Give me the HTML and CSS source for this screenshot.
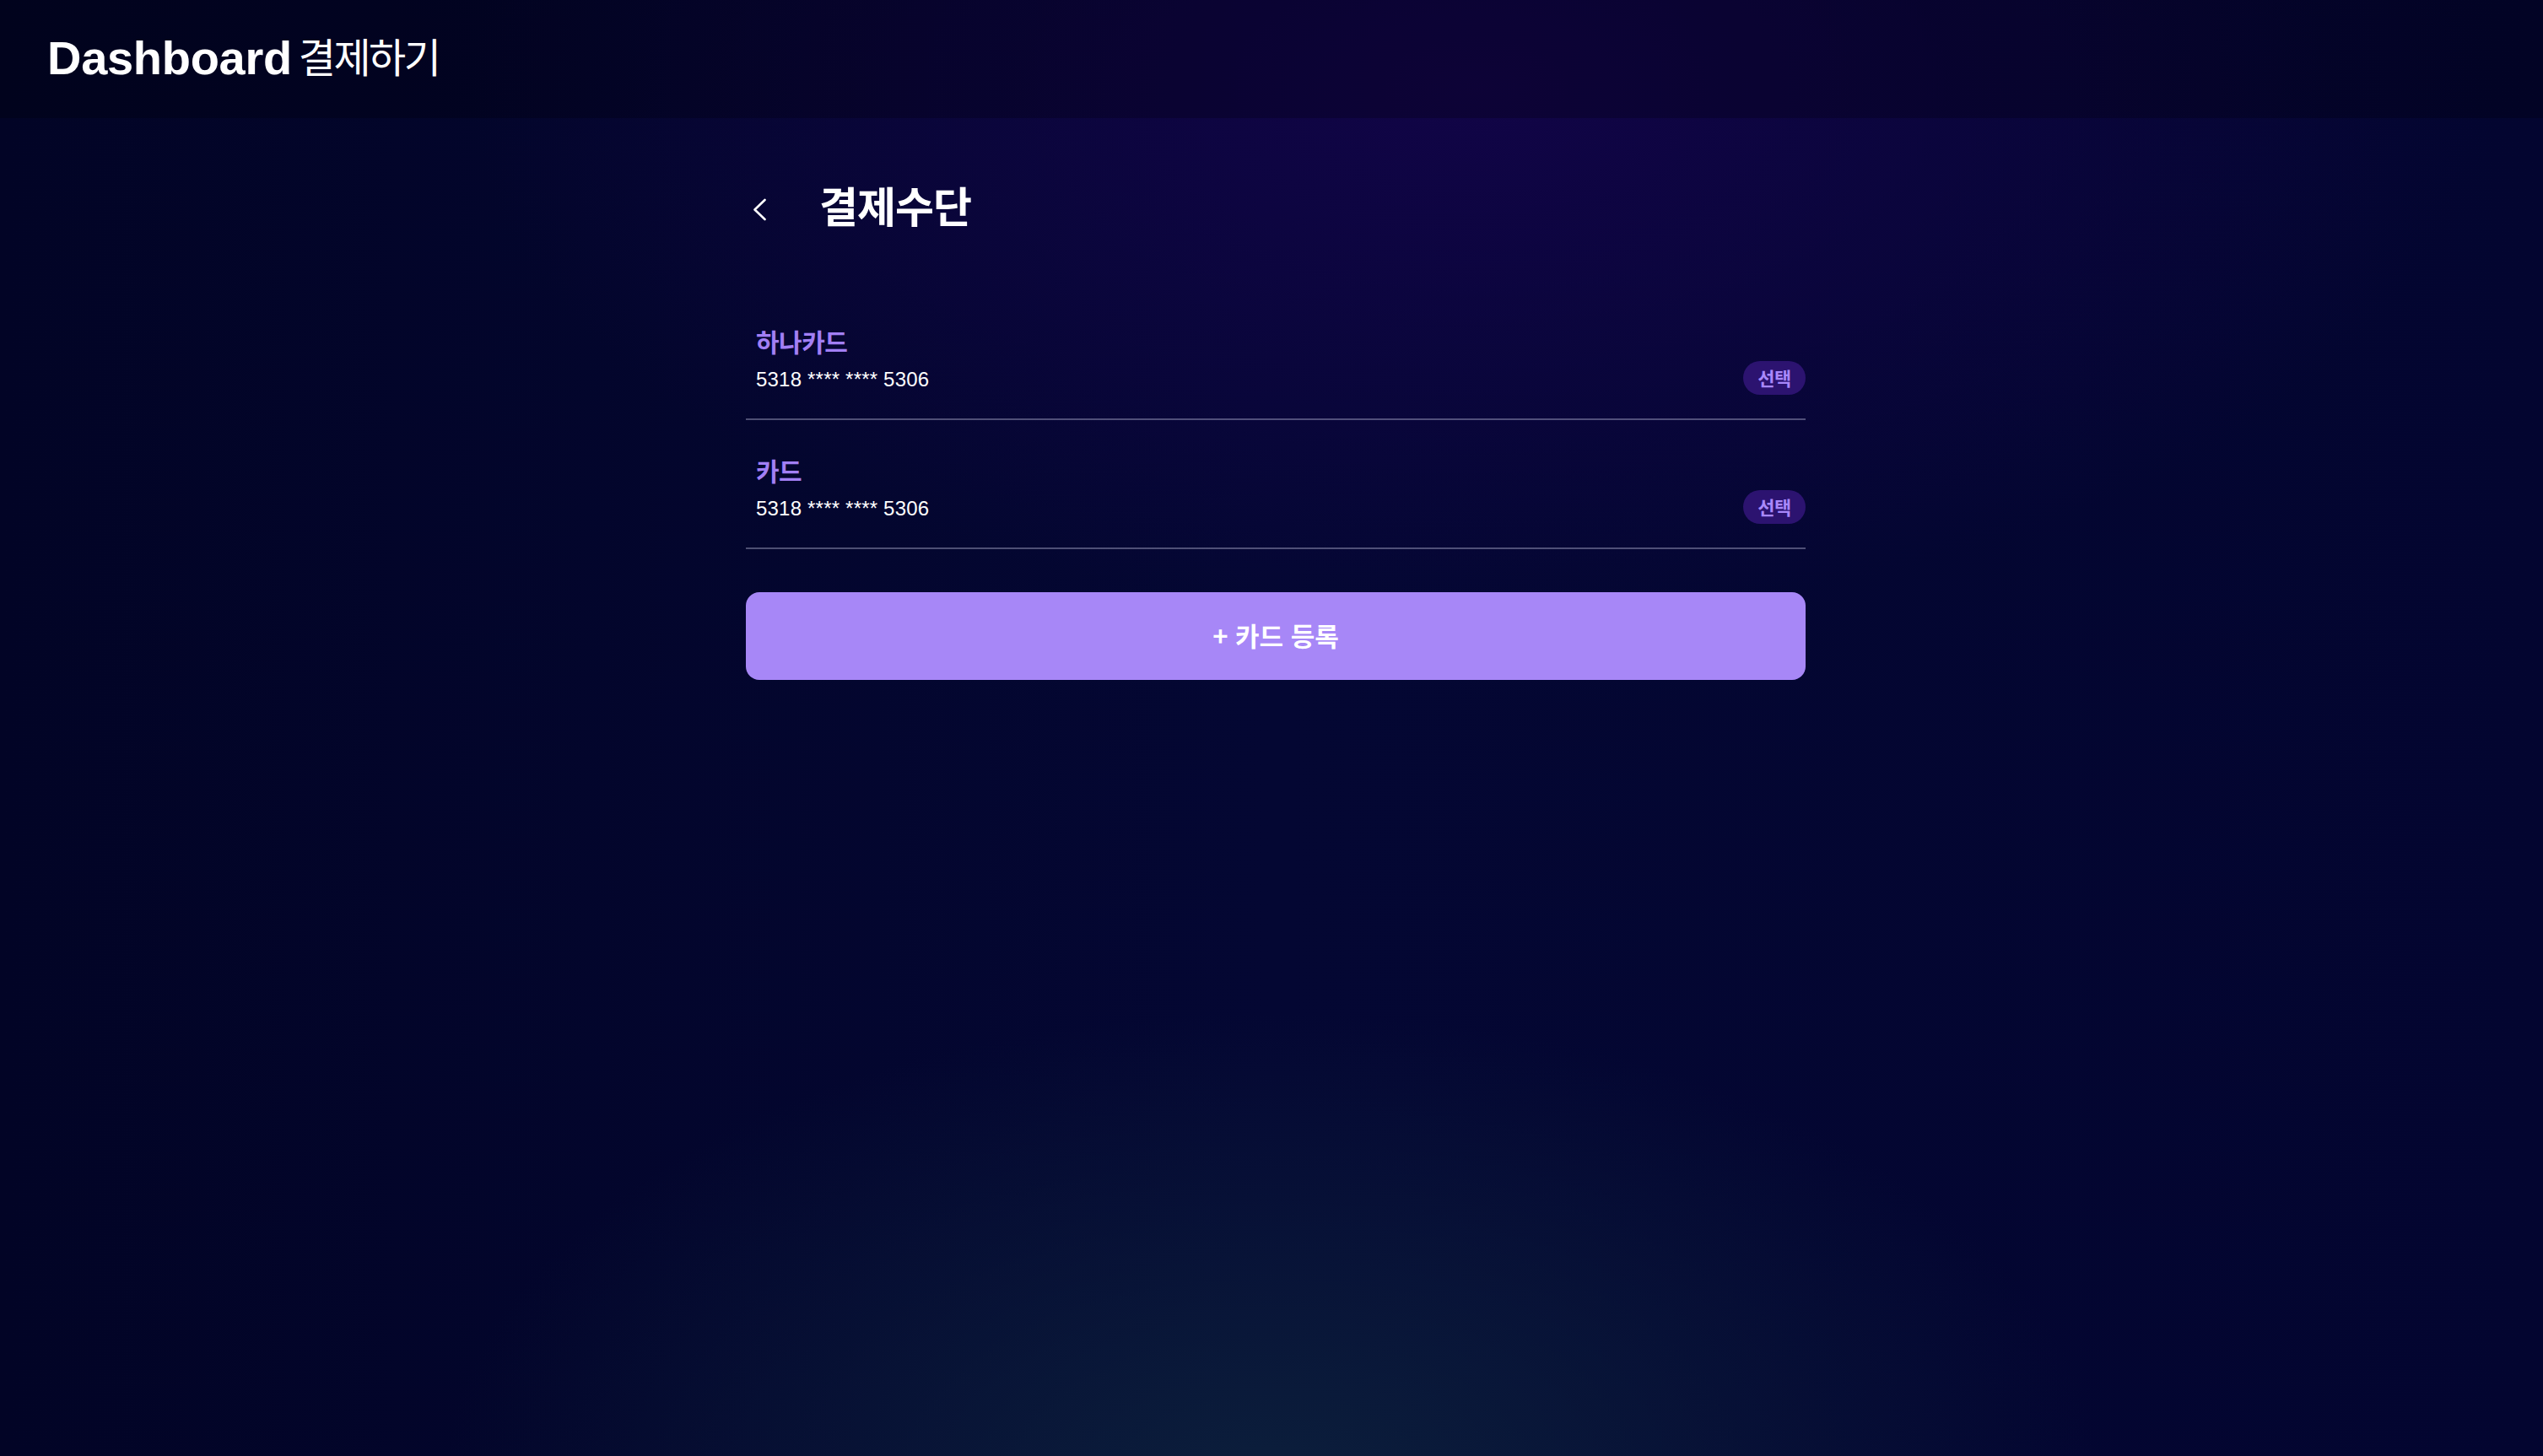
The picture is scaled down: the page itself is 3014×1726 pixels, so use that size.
FILE: index.html
```html
<!DOCTYPE html>
<html lang="ko">
<head>
<meta charset="utf-8">
<title>Dashboard 결제하기</title>
<link rel="stylesheet" href="styles.css">
</head>
<body>
<div class="page">
  <header class="topbar">
    <span class="brand">Dashboard</span><span class="brand-sub">결제하기</span>
  </header>
  <main class="main">
    <div class="wrap">
      <div class="title-row">
        <button class="back" aria-label="뒤로">
          <svg width="34" height="60" viewBox="0 0 34 60"><path d="M22.5 25 L10.5 36.5 L22.5 48" fill="none" stroke="#fff" stroke-width="2.6" stroke-linecap="round" stroke-linejoin="round"/></svg>
        </button>
        <h1 class="title">결제수단</h1>
      </div>
      <ul class="cards">
        <li class="card">
          <div class="card-info">
            <div class="card-name">하나카드</div>
            <div class="card-num">5318 **** **** 5306</div>
          </div>
          <span class="badge">선택</span>
        </li>
        <li class="card">
          <div class="card-info">
            <div class="card-name">카드</div>
            <div class="card-num">5318 **** **** 5306</div>
          </div>
          <span class="badge">선택</span>
        </li>
      </ul>
      <button class="add-btn">+ 카드 등록</button>
    </div>
  </main>
</div>
</body>
</html>
```

FILE: styles.css
```css
* { box-sizing: border-box; }
html, body { margin: 0; padding: 0; height: 100%; }
body {
  font-family: "Liberation Sans", Arial, "Noto Sans CJK KR", sans-serif;
  color: #fff;
  background-color: #03052a;
  background-image:
    radial-gradient(ellipse 1700px 900px at 58% 6%, rgba(18, 4, 72, 0.95), rgba(18, 4, 72, 0) 70%),
    radial-gradient(ellipse 1400px 800px at 50% 102%, rgba(12, 32, 60, 0.95), rgba(12, 32, 60, 0) 70%),
    linear-gradient(90deg, #020426 0%, #040733 50%, #030530 100%);
  min-height: 100vh;
}
.page { min-height: 100vh; display: flex; flex-direction: column; }

.topbar {
  height: 140px;
  display: flex;
  align-items: baseline;
  padding: 32px 0 0 56px;
  background: rgba(0, 0, 0, 0.22);
}
.brand {
  font-family: "Liberation Sans", Arial, sans-serif;
  font-weight: 700;
  font-size: 56px;
  letter-spacing: -0.3px;
}
.brand-sub {
  font-family: "Noto Sans CJK KR", sans-serif;
  font-weight: 400;
  font-size: 48px;
  letter-spacing: -2.5px;
  margin-left: 8px;
  position: relative;
  top: -2px;
}

.main { padding-left: 10px; }
.wrap { width: 1256px; margin: 0 auto; padding-top: 72px; }

.title-row { display: flex; align-items: center; }
.back {
  background: none; border: 0; padding: 0; margin: 0;
  width: 34px; height: 60px; display: block; cursor: pointer;
}
.back svg { display: block; }
.title {
  margin: 0 0 0 53px;
  font-family: "Noto Sans CJK KR", sans-serif;
  font-weight: 700;
  font-size: 50px;
  line-height: 60px;
  letter-spacing: -1px;
}

.cards { list-style: none; margin: 73px 0 0; padding: 0; }
.card {
  display: flex;
  justify-content: space-between;
  align-items: flex-end;
  padding: 39px 0 28px 12px;
  border-bottom: 2px solid rgba(200, 200, 230, 0.38);
}
.card-name {
  font-family: "Noto Sans CJK KR", sans-serif;
  font-weight: 700;
  font-size: 30px;
  line-height: 40px;
  letter-spacing: -0.5px;
  color: #a27ff5;
  margin-bottom: 8px;
}
.card-num {
  font-family: "Liberation Sans", Arial, sans-serif;
  font-size: 24px;
  line-height: 36px;
  letter-spacing: 0.2px;
  color: #fff;
}
.badge {
  display: inline-flex;
  align-items: center;
  justify-content: center;
  width: 74px;
  height: 40px;
  border-radius: 20px;
  background: #2c1370;
  color: #a888fa;
  font-family: "Noto Sans CJK KR", sans-serif;
  font-weight: 700;
  font-size: 22px;
  letter-spacing: -0.5px;
  padding-bottom: 2px;
}

.add-btn {
  display: block;
  width: 100%;
  height: 104px;
  margin-top: 51px;
  padding: 0 0 4px;
  border: 0;
  border-radius: 16px;
  background: #a787f7;
  color: #fff;
  font-family: "Noto Sans CJK KR", sans-serif;
  font-weight: 700;
  font-size: 31px;
  letter-spacing: 0;
  cursor: pointer;
}
```
